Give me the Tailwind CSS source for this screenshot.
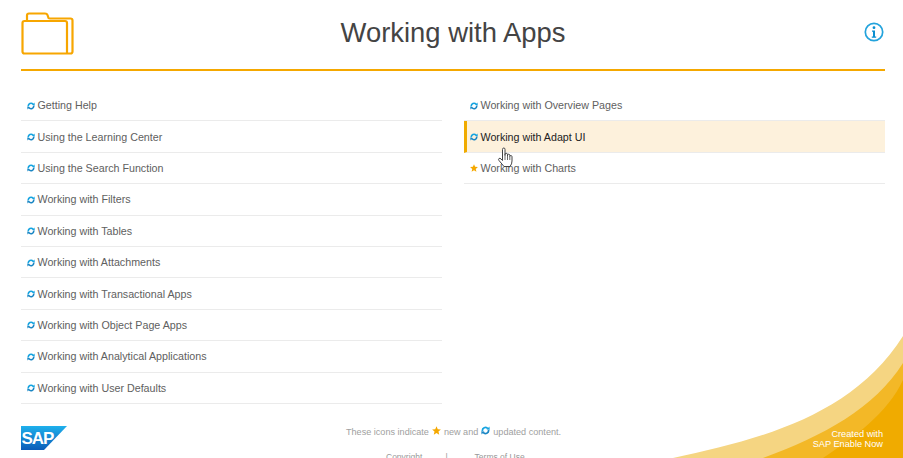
<!DOCTYPE html>
<html><head><meta charset="utf-8"><script src="https://cdn.jsdelivr.net/npm/@tailwindcss/browser@4"></script></head>
<body class="bg-white">
<div class="relative w-[903px] h-[458px] overflow-hidden bg-white font-['Liberation_Sans',Arial,sans-serif]">
  <svg width="0" height="0" class="absolute"><defs>
    <symbol id="upd" viewBox="0 0 10 10"><path d="M1.700 5.600A3.300 3.300 0 0 1 7.600 3" fill="none" stroke="#14a3e0" stroke-width="2"/><path d="M6.200 3.800 9.700 4.200 9.400 .6 Z" fill="#14a3e0"/><path d="M8.300 4.400A3.300 3.300 0 0 1 2.400 7" fill="none" stroke="#1a86c4" stroke-width="2"/><path d="M3.800 6.200 .3 5.800 .6 9.400 Z" fill="#1a86c4"/></symbol>
    <symbol id="star" viewBox="0 0 10 10"><path d="M5 .3 6.400 3.500 9.900 3.800 7.200 6.100 8 9.700 5 7.800 2 9.700 2.800 6.100 .1 3.800 3.600 3.500Z" fill="#f5a800"/></symbol>
  </defs></svg>

  <header class="ml-[21px] w-[864px] h-[71px] border-b-2 border-[#f5a800] grid grid-cols-[53px_1fr_53px] items-start">
    <svg class="mt-[12px]" width="53" height="43" viewBox="0 0 53 43" fill="none" stroke="#f7a600" stroke-width="2.200"><path d="M6 9V3.500Q6 1.500 8 1.500H24Q26 1.500 26.500 3L27.500 6Q28 6.500 29 6.500H49.500Q51.500 6.500 51.500 8.500V39.500Q51.500 41.500 49.500 41.500H3.500Q1.500 41.500 1.500 39.500V11Q1.500 9 3.500 9H44Q46 9 46 11V41.500"/></svg>
    <h1 class="mt-[15px] text-center text-[27.400px] leading-[36px] text-[#444444] font-normal">Working with Apps</h1>
    <svg class="mt-[22px] ml-[32px]" width="20" height="20" viewBox="0 0 20 20"><circle cx="10" cy="10" r="8.700" fill="none" stroke="#23a3dc" stroke-width="1.700"/><circle cx="10" cy="5.700" r="1.400" fill="#0a8fd0"/><path d="M8 8.500h3v6h1.200v1.300H7.800v-1.300H9v-4.700H8Z" fill="#0a8fd0"/></svg>
  </header>

  <main class="ml-[21px] mt-[19px] grid grid-cols-[421px_421px] gap-x-[22px] text-[10.700px] text-[#606060]">
    <ul>
      <li class="h-[31.400px] border-b border-[#ebebeb] flex items-center pl-[6px] gap-[2.500px]"><svg class="w-[8px] h-[8px] shrink-0 mt-[1px]"><use href="#upd"/></svg><span>Getting Help</span></li>
      <li class="h-[31.400px] border-b border-[#ebebeb] flex items-center pl-[6px] gap-[2.500px]"><svg class="w-[8px] h-[8px] shrink-0 mt-[1px]"><use href="#upd"/></svg><span>Using the Learning Center</span></li>
      <li class="h-[31.400px] border-b border-[#ebebeb] flex items-center pl-[6px] gap-[2.500px]"><svg class="w-[8px] h-[8px] shrink-0 mt-[1px]"><use href="#upd"/></svg><span>Using the Search Function</span></li>
      <li class="h-[31.400px] border-b border-[#ebebeb] flex items-center pl-[6px] gap-[2.500px]"><svg class="w-[8px] h-[8px] shrink-0 mt-[1px]"><use href="#upd"/></svg><span>Working with Filters</span></li>
      <li class="h-[31.400px] border-b border-[#ebebeb] flex items-center pl-[6px] gap-[2.500px]"><svg class="w-[8px] h-[8px] shrink-0 mt-[1px]"><use href="#upd"/></svg><span>Working with Tables</span></li>
      <li class="h-[31.400px] border-b border-[#ebebeb] flex items-center pl-[6px] gap-[2.500px]"><svg class="w-[8px] h-[8px] shrink-0 mt-[1px]"><use href="#upd"/></svg><span>Working with Attachments</span></li>
      <li class="h-[31.400px] border-b border-[#ebebeb] flex items-center pl-[6px] gap-[2.500px]"><svg class="w-[8px] h-[8px] shrink-0 mt-[1px]"><use href="#upd"/></svg><span>Working with Transactional Apps</span></li>
      <li class="h-[31.400px] border-b border-[#ebebeb] flex items-center pl-[6px] gap-[2.500px]"><svg class="w-[8px] h-[8px] shrink-0 mt-[1px]"><use href="#upd"/></svg><span>Working with Object Page Apps</span></li>
      <li class="h-[31.400px] border-b border-[#ebebeb] flex items-center pl-[6px] gap-[2.500px]"><svg class="w-[8px] h-[8px] shrink-0 mt-[1px]"><use href="#upd"/></svg><span>Working with Analytical Applications</span></li>
      <li class="h-[31.400px] border-b border-[#ebebeb] flex items-center pl-[6px] gap-[2.500px]"><svg class="w-[8px] h-[8px] shrink-0 mt-[1px]"><use href="#upd"/></svg><span>Working with User Defaults</span></li>
    </ul>
    <ul>
      <li class="h-[31.400px] border-b border-[#ebebeb] flex items-center pl-[6px] gap-[2.500px]"><svg class="w-[8px] h-[8px] shrink-0 mt-[1px]"><use href="#upd"/></svg><span>Working with Overview Pages</span></li>
      <li class="h-[31.400px] border-b border-[#ebebeb] border-l-[3px] border-l-[#f0ab00] bg-[#fdf1dc] text-[#222222] flex items-center pl-[3px] gap-[2.500px]"><svg class="w-[8px] h-[8px] shrink-0 mt-[1px]"><use href="#upd"/></svg><span>Working with Adapt UI</span></li>
      <li class="h-[31.400px] border-b border-[#ebebeb] flex items-center pl-[6px] gap-[2.500px]"><svg class="w-[8px] h-[8px] shrink-0 mt-[1px]"><use href="#star"/></svg><span>Working with Charts</span></li>
    </ul>
  </main>

  <footer class="ml-[21px] mt-[20.500px] flex items-start text-[9.100px] text-[#a0a0a0]">
    <svg width="46" height="24" viewBox="0 0 46 24" class="mt-[2px] shrink-0"><defs><linearGradient id="sg" x1="0" y1="0" x2="0" y2="1"><stop offset="0" stop-color="#1fb0ec"/><stop offset="1" stop-color="#0a5cb8"/></linearGradient></defs><path d="M0 0H46L23 24H0Z" fill="url(#sg)"/><text x=".5" y="18" font-family="Liberation Sans" font-weight="700" font-size="17" letter-spacing="-1" fill="#fff">SAP</text></svg>
    <div class="ml-[279px] flex items-center h-[14px] mt-[1px] whitespace-nowrap"><span>These icons indicate</span><svg class="w-[9px] h-[9px] mx-[3px] mb-[3px]"><use href="#star"/></svg><span>new and</span><svg class="w-[9px] h-[9px] mx-[3px] mb-[3px]"><use href="#upd"/></svg><span>updated content.</span></div>
  </footer>
  <div class="absolute left-[386px] top-[452px] flex text-[8.500px] leading-[11px] text-[#999999] whitespace-nowrap"><span>Copyright</span><span class="ml-[23px]">|</span><span class="ml-[27px]">Terms of Use</span></div>

  <svg class="absolute right-0 bottom-0" width="240" height="130" viewBox="0 0 240 130">
    <path d="M10 130C95 112 190 88 240 8V130Z" fill="#f5d582"/>
    <path d="M100 130C160 108 212 80 240 35V130Z" fill="#f3b827"/>
    <path d="M160 130C190 110 225 85 240 52V130Z" fill="#f0ab00"/>
  </svg>
  <div class="absolute right-[20px] top-[428.500px] text-right text-white text-[9.200px] leading-[10.500px]">Created with<br>SAP Enable Now</div>

  <svg class="absolute left-[497px] top-[147px]" width="17" height="21" viewBox="0 0 17 21"><path d="M5.500 11V2.500Q5.500 1 6.800 1T8 2.500V8.500V7.500Q8 6.300 9.200 6.300T10.500 7.500V9V8.300Q10.500 7.200 11.600 7.200T12.800 8.300V9.500Q12.800 8.500 13.800 8.500T15 9.600V14Q15 17 13 19.500H7L2 13.500Q1 12.200 2 11.500T4 12L5.500 13.500Z" fill="#fff" stroke="#444" stroke-width="1" stroke-linejoin="round"/><path d="M8 8.500V13M10.500 9V13M12.800 9.500V13" stroke="#444" stroke-width=".8"/></svg>
</div>
</body></html>
